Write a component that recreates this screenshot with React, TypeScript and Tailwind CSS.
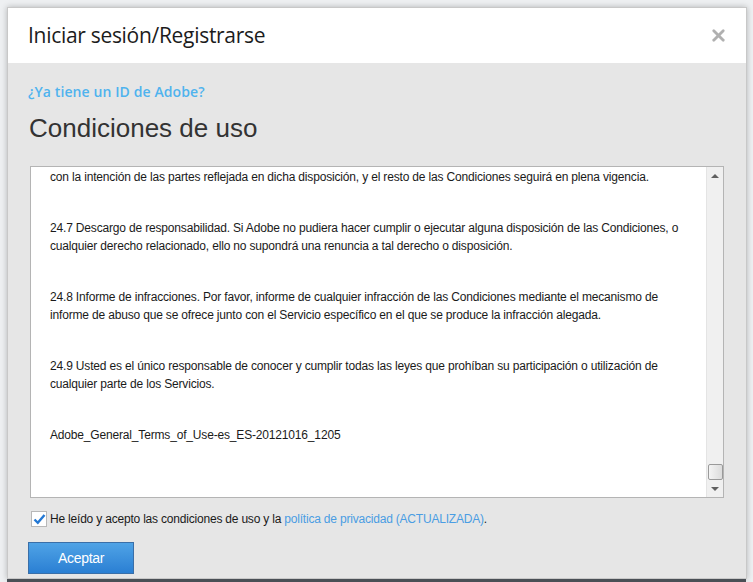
import { X } from 'lucide-react';

const paragraphs = [
  ['con la intención de las partes reflejada en dicha disposición, y el resto de las Condiciones seguirá en plena vigencia.'],
  [
    '24.7 Descargo de responsabilidad. Si Adobe no pudiera hacer cumplir o ejecutar alguna disposición de las Condiciones, o',
    'cualquier derecho relacionado, ello no supondrá una renuncia a tal derecho o disposición.',
  ],
  [
    '24.8 Informe de infracciones. Por favor, informe de cualquier infracción de las Condiciones mediante el mecanismo de',
    'informe de abuso que se ofrece junto con el Servicio específico en el que se produce la infracción alegada.',
  ],
  [
    '24.9 Usted es el único responsable de conocer y cumplir todas las leyes que prohíban su participación o utilización de',
    'cualquier parte de los Servicios.',
  ],
  ['Adobe_General_Terms_of_Use-es_ES-20121016_1205'],
];

export default function App() {
  return (
    <div className="w-[753px] h-[582px] bg-[#eef0f2] overflow-hidden flex flex-col pt-[7px] px-[7px] font-['Liberation_Sans',Arial,sans-serif]">
      <div className="flex-1 flex flex-col w-[740px] border border-[#c8c8c8] shadow-[0_0_6px_rgba(0,0,0,0.25)] bg-[#e6e6e6]">
        {/* Header */}
        <div className="h-[55px] bg-white flex items-center justify-between pl-[20px] pr-[18px] shrink-0">
          <h1 className="text-[21px] text-[#1c1c1c] font-['Open_Sans',sans-serif] tracking-[-0.3px] pt-[1px]">
            Iniciar sesión/Registrarse
          </h1>
          <X className="text-[#b0b0b0]" size={19} strokeWidth={3.5} />
        </div>

        {/* Body */}
        <div className="flex-1 flex flex-col pl-[20px] pr-[22px] pt-[19px]">
          <a className="text-[14px] font-semibold text-[#4fb3ee] font-['Open_Sans',sans-serif] leading-[20px] tracking-[0.1px]">
            ¿Ya tiene un ID de Adobe?
          </a>
          <h2 className="mt-[9px] text-[26px] text-[#333] leading-[34px] pl-[1px]">Condiciones de uso</h2>

          <div className="mt-[21px] ml-[2px] h-[332px] bg-white border border-[#b4b4b4] flex">
            <div className="flex-1 pl-[19px] pt-[1px] text-[12px] leading-[18px] text-[#1a1a1a] tracking-[-0.17px] overflow-hidden">
              {paragraphs.map((p, i) => (
                <div key={i} className="mb-[33px] whitespace-nowrap">
                  {p.map((line, j) => (
                    <div key={j}>{line}</div>
                  ))}
                </div>
              ))}
            </div>
            {/* Scrollbar */}
            <div className="w-[17px] bg-[#f0f0f0] border-l border-[#e4e4e4] flex flex-col items-center">
              <div className="h-[17px] flex items-center justify-center">
                <div className="w-0 h-0 border-l-[4px] border-r-[4px] border-b-[4px] border-l-transparent border-r-transparent border-b-[#606060]" />
              </div>
              <div className="flex-1" />
              <div className="w-[15px] h-[16px] rounded-[2px] border border-[#9a9a9a] bg-gradient-to-r from-[#f4f4f4] to-[#dcdcdc]" />
              <div className="h-[17px] flex items-center justify-center">
                <div className="w-0 h-0 border-l-[4px] border-r-[4px] border-t-[4px] border-l-transparent border-r-transparent border-t-[#606060]" />
              </div>
            </div>
          </div>

          <label className="mt-[12px] ml-[3px] flex items-center gap-[3px] text-[12px] text-[#1a1a1a] tracking-[-0.2px]">
            <span className="w-[16px] h-[16px] bg-white border border-[#b8b8b8] flex items-center justify-center">
              <svg width="13" height="12" viewBox="0 0 13 12">
                <path d="M1.5 6.5 L4.8 9.8 L11.5 2" fill="none" stroke="#2378d4" strokeWidth="2.4" />
              </svg>
            </span>
            <span>
              He leído y acepto las condiciones de uso y la{' '}
              <span className="text-[#4a9de3]">política de privacidad (ACTUALIZADA)</span>.
            </span>
          </label>

          <button className="mt-[14px] w-[106px] h-[32px] border border-[#3a6fa8] bg-gradient-to-b from-[#4fa3e6] to-[#2a7fd3] text-white text-[14px] tracking-[-0.3px]">
            Aceptar
          </button>
        </div>
      </div>
      <div className="h-[3px] bg-[#4a4f55] shrink-0" />
    </div>
  );
}
